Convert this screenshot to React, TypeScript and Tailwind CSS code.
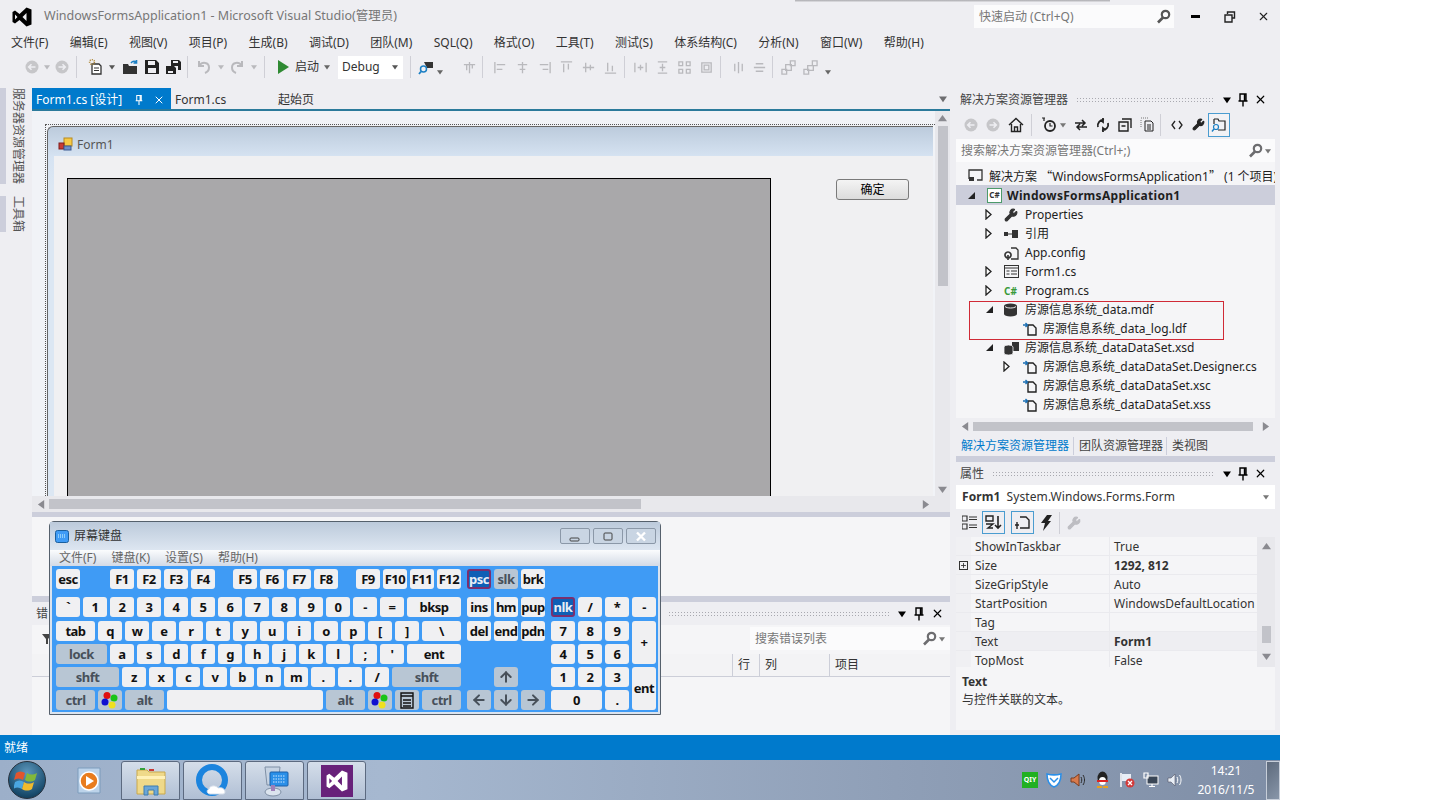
import type { ReactNode } from 'react';
import { ArrowDown, ArrowLeft, ArrowRight, ArrowUp, Plus, Wrench, X } from 'lucide-react';

// shared bits
const Tri = ({ dir, className = 'text-[#6d6d70]', size = 7 }: { dir: 'up' | 'down' | 'left' | 'right'; className?: string; size?: number }) => {
  const pts = { up: '0,8 5,1 10,8', down: '0,2 10,2 5,9', left: '8,0 8,10 1,5', right: '2,0 2,10 9,5' }[dir];
  return (
    <svg width={size} height={size} viewBox="0 0 10 10" className={className}>
      <polygon points={pts} fill="currentColor" />
    </svg>
  );
};

const Pin = ({ className = 'text-black' }: { className?: string }) => (
  <svg width="10" height="14" viewBox="0 0 10 14" className={className}>
    <path d="M2 1h6v7H2zM0.5 8h9M5 8v5.5M6.5 1.5v6" fill="none" stroke="currentColor" strokeWidth="1.4" />
  </svg>
);

const Dots = ({ className = '' }: { className?: string }) => (
  <div className={`h-[6px] flex-1 bg-[radial-gradient(#a9a9b0_0.6px,transparent_0.7px)] bg-[length:3px_3px] ${className}`} />
);

const PanelTitle = ({ title }: { title: string }) => (
  <div className="flex h-[23px] items-center text-[12px] text-[#444]">
    <span className="ml-[4px] mr-[8px] whitespace-nowrap">{title}</span>
    <Dots />
    <div className="ml-[7px] flex w-[54px] items-center text-black">
      <Tri dir="down" className="ml-[2px] text-black" size={8} />
      <Pin className="ml-[7px] text-black" />
      <X size={13} strokeWidth={2.2} className="ml-[6px]" />
    </div>
  </div>
);

const SearchIcon = ({ className = 'text-[#6d6d70]' }: { className?: string }) => (
  <svg width="15" height="15" viewBox="0 0 15 15" className={className}>
    <circle cx="9.5" cy="5.5" r="3.7" fill="none" stroke="currentColor" strokeWidth="2.2" />
    <path d="M7 8.5 2 13.5" stroke="currentColor" strokeWidth="2.6" />
  </svg>
);

const VsLogo = ({ fill = '#000', size = 20 }: { fill?: string; size?: number }) => (
  <svg width={size} height={size} viewBox="0 0 20 20">
    <path
      fillRule="evenodd"
      fill={fill}
      d="M14.5 0.5 19.5 2.5V17.5L14.5 19.5 7.5 13 3 16.5 0.5 15V5L3 3.5 7.5 7ZM14.5 6 10.5 10 14.5 14ZM3 7.5V12.5L5.5 10Z"
    />
  </svg>
);

const NavCircle = ({ dir }: { dir: 'l' | 'r' }) => (
  <svg width="14" height="14" viewBox="0 0 14 14">
    <circle cx="7" cy="7" r="6.5" fill="#c6c6c9" />
    <path d={dir === 'l' ? 'M10.5 7H4M6.5 4.2 3.7 7l2.8 2.8' : 'M3.5 7H10M7.5 4.2 10.3 7l-2.8 2.8'} fill="none" stroke="#eeeef2" strokeWidth="1.6" />
  </svg>
);

const Sep = ({ className = '' }: { className?: string }) => <div className={`h-[22px] w-px bg-[#cfcfd6] ${className}`} />;

const GreyGlyph = ({ d, className = '' }: { d: string; className?: string }) => (
  <svg width="15" height="15" viewBox="0 0 16 16" className={className}>
    <path d={d} fill="none" stroke="#b9b9bd" strokeWidth="1.4" />
  </svg>
);

const Grip = ({ className = '' }: { className?: string }) => (
  <div className={`h-[20px] w-[5px] bg-[radial-gradient(#a9a9b0_0.6px,transparent_0.7px)] bg-[length:2px_2px] ${className}`} />
);

// toolbar
const menus = ['文件(F)', '编辑(E)', '视图(V)', '项目(P)', '生成(B)', '调试(D)', '团队(M)', 'SQL(Q)', '格式(O)', '工具(T)', '测试(S)', '体系结构(C)', '分析(N)', '窗口(W)', '帮助(H)'];

const alignGlyphs = [
  'M2 2v12M4 5h9M4 10h6',
  'M8 2v12M3 5h10M5 10h6',
  'M14 2v12M3 5h9M6 10h6',
  'M2 2h12M5 4v9M10 4v6',
  'M2 8h12M5 3v10M10 5v6',
  'M2 14h12M5 3v9M10 6v6',
];
const sizeGlyphs = [
  'M2 3v10M14 3v10M5 8h6M8 5v6',
  'M3 2h10M3 14h10M8 4v8M5 8h6',
  'M2 2h4v4H2zM10 2h4v4h-4zM2 10h4v4H2zM10 10h4v4h-4z',
  'M3 3h10v10H3zM5.5 5.5h5v5h-5z',
];

const Toolbar = () => (
  <div className="mb-[2px] flex h-[30px] items-center pl-[14px]">
    <Grip />
    <div className="ml-[6px]"><NavCircle dir="l" /></div>
    <Tri dir="down" className="ml-[5px] text-[#b9b9bd]" size={6} />
    <div className="ml-[5px]"><NavCircle dir="r" /></div>
    <Sep className="ml-[7px]" />
    <svg width="16" height="16" viewBox="0 0 16 16" className="ml-[11px]">
      <path d="M4 5h7l2 2v8H4z" fill="#fff" stroke="#333" strokeWidth="1.3" />
      <path d="M6 9h5M6 11.5h5" stroke="#333" />
      <circle cx="4" cy="3" r="2.4" fill="none" stroke="#b08a3a" strokeDasharray="1 1" strokeWidth="1.6" />
    </svg>
    <Tri dir="down" className="ml-[5px] text-[#555]" size={6} />
    <svg width="17" height="15" viewBox="0 0 17 15" className="ml-[7px]">
      <path d="M1 4h5l1 2h8v8H1z" fill="#333" />
      <path d="M9 3c2-2.5 4-2 5.5-.5M14.500 0v3h-3" fill="none" stroke="#1b7fc4" strokeWidth="1.6" />
    </svg>
    <svg width="14" height="14" viewBox="0 0 14 14" className="ml-[6px]">
      <path fillRule="evenodd" fill="#222" d="M0 0h11l3 3v11H0ZM3 1v4h7V1ZM3 8v5h8V8Z" />
    </svg>
    <svg width="15" height="14" viewBox="0 0 15 14" className="ml-[7px]">
      <path fillRule="evenodd" fill="#222" d="M5 0h8l2 2v8h-3V6H5ZM7 1v2h5V1Z" />
      <path fillRule="evenodd" fill="#222" d="M0 6h8l2 2v6H0ZM2 11v2h5v-2Z" />
    </svg>
    <Sep className="ml-[6px]" />
    <svg width="16" height="16" viewBox="0 0 16 16" className="ml-[8px]">
      <path d="M3 2v5h5M3.500 6.500C6 2.500 13 3 13 8.500c0 2.500-1.500 4.500-4 5.500" fill="none" stroke="#b9b9bd" strokeWidth="2" />
    </svg>
    <Tri dir="down" className="ml-[6px] text-[#b9b9bd]" size={6} />
    <svg width="16" height="16" viewBox="0 0 16 16" className="ml-[5px]">
      <path d="M13 2v5H8M12.500 6.500C10 2.500 3 3 3 8.500c0 2.500 1.500 4.500 4 5.500" fill="none" stroke="#b9b9bd" strokeWidth="2" />
    </svg>
    <Tri dir="down" className="ml-[6px] text-[#b9b9bd]" size={6} />
    <Sep className="ml-[7px]" />
    <svg width="11" height="14" viewBox="0 0 11 14" className="ml-[13px]"><polygon points="0,0 11,7 0,14" fill="#2f8a33" /></svg>
    <span className="ml-[6px] text-[12px] leading-none text-[#333]">启动</span>
    <Tri dir="down" className="ml-[5px] text-[#666]" size={6} />
    <div className="ml-[8px] flex h-[23px] w-[65px] items-center justify-between bg-white pl-[4px] pr-[5px] text-[12px] text-[#333]">
      Debug
      <Tri dir="down" className="text-[#555]" size={6} />
    </div>
    <Sep className="ml-[7px]" />
    <svg width="16" height="16" viewBox="0 0 16 16" className="ml-[7px]">
      <path d="M6 3h9v6H9z" fill="#333" />
      <circle cx="5.500" cy="10" r="3" fill="none" stroke="#1b7fc4" strokeWidth="1.5" />
      <path d="M3 12.500 1 15" stroke="#1b7fc4" strokeWidth="1.8" />
    </svg>
    <Tri dir="down" className="ml-[3px] mt-[10px] text-[#666]" size={6} />
    <Grip className="ml-[6px]" />
    <GreyGlyph d="M8 2v12M2 5h12M5 5v6M11 5v4" className="ml-[8px]" />
    <Sep className="ml-[5px]" />
    <div className="ml-[10px] flex gap-[7px]">
      {alignGlyphs.map((d) => <GreyGlyph key={d} d={d} />)}
    </div>
    <Sep className="ml-[6px]" />
    <div className="ml-[8px] flex gap-[7px]">
      {sizeGlyphs.map((d) => <GreyGlyph key={d} d={d} />)}
    </div>
    <Sep className="ml-[6px]" />
    <div className="ml-[10px] flex gap-[6px]">
      <GreyGlyph d="M8 2v12M4 4v8M12 4v8" />
      <GreyGlyph d="M2 8h12M4 4h8M4 12h8" />
    </div>
    <Sep className="ml-[5px]" />
    <div className="ml-[8px] flex gap-[7px]">
      <GreyGlyph d="M1 10h5v5H1zM5 5h6v6H5zM10 1h5v5h-5z" />
      <GreyGlyph d="M10 1h5v5h-5zM5 6h6v5H5zM1 10h5v5H1z" />
    </div>
    <Tri dir="down" className="ml-[7px] mt-[10px] text-[#666]" size={6} />
  </div>
);

// left dock
const VerticalTab = ({ label, h }: { label: string; h: string }) => (
  <div className={`flex ${h}`}>
    <div className="w-[6px] bg-[#cccedb]" />
    <span className="ml-[4px] whitespace-nowrap text-[12px] leading-[16px] text-[#555] [text-orientation:sideways] [writing-mode:vertical-rl]">{label}</span>
  </div>
);

const LeftDock = () => (
  <div className="w-[32px] shrink-0 pt-[4px]">
    <VerticalTab label="服务器资源管理器" h="h-[96px]" />
    <div className="mt-[12px]"><VerticalTab label="工具箱" h="h-[36px]" /></div>
  </div>
);

// designer
const DesignerTabs = () => (
  <>
    <div className="mt-[4px] flex h-[21px] items-center text-[12px]">
      <div className="flex h-full w-[139px] items-center bg-[#007acc] pl-[4px] pt-[2px] text-white">
        Form1.cs [设计]
        <Pin className="ml-[12px] scale-75 text-white" />
        <X size={12} strokeWidth={2} className="ml-[9px]" />
      </div>
      <span className="ml-[4px] w-[103px] pt-[2px] text-[#333]">Form1.cs</span>
      <span className="pt-[2px] text-[#333]">起始页</span>
      <Tri dir="down" className="ml-auto mr-[3px] text-[#6d6d70]" size={8} />
    </div>
    <div className="h-[2px] bg-[#2b7a9b]" />
  </>
);

const Designer = () => (
  <div className="flex h-[385px]">
    <div className="flex-1 overflow-hidden bg-[#f1f3f7] pl-[13px] pt-[13px]">
      <div className="h-[500px] w-[890px] border-l border-t border-dotted border-[#555] pl-[1px] pt-[1px]">
        <div className="w-[886px] rounded-tl-[6px] border-l border-t border-[#666] bg-[linear-gradient(#bccbdc_0,#d6e3f2_30px,#dce7f3_60px)]">
          <div className="flex h-[29px] items-center pl-[10px] pt-[6px] text-[12px] text-[#555]">
            <svg width="15" height="15" viewBox="0 0 15 15">
              <rect x="6" y="1" width="8" height="8" fill="#f6c944" stroke="#b88a1c" />
              <rect x="1" y="6" width="5" height="6" fill="#c83a34" stroke="#7e1c1a" />
              <rect x="6" y="9" width="7" height="4" fill="#6d8fc9" stroke="#3c5a92" />
            </svg>
            <span className="ml-[4px]">Form1</span>
          </div>
          <div className="ml-[6px] flex h-[400px] bg-[#f0f0f2] pl-[13px] pt-[22px]">
            <div className="h-[400px] w-[704px] border border-black bg-[#a9a8aa]" />
            <button className="ml-[65px] mt-px h-[21px] w-[73px] rounded-[3px] border border-[#7a7a7a] bg-[linear-gradient(#f4f4f4,#dcdcdc)] text-[12px] leading-none text-black">确定</button>
          </div>
        </div>
      </div>
    </div>
    <div className="flex w-[15px] flex-col items-center bg-[#e8e8ec] pt-[3px]">
      <Tri dir="up" size={9} className="text-[#8a8a90]" />
      <div className="mt-[3px] h-[160px] w-[10px] bg-[#c2c3c9]" />
      <Tri dir="down" size={9} className="mt-auto mb-[2px] text-[#8a8a90]" />
    </div>
  </div>
);

const DesignerScroll = () => (
  <div className="flex h-[16px] items-center bg-[#e8e8ec] pl-[5px] pr-[20px]">
    <Tri dir="left" size={9} className="text-[#8a8a90]" />
    <div className="ml-[3px] h-[10px] w-[592px] bg-[#c2c3c9]" />
    <Tri dir="right" size={9} className="ml-auto text-[#8a8a90]" />
  </div>
);

// error list
const ErrorList = () => (
  <div className="flex-1 bg-[#f5f5f7]">
    <div className="flex h-[23px] items-center bg-[#eeeef2] text-[12px] text-[#444]">
      <span className="ml-[4px]">错</span>
      <Dots className="ml-[620px]" />
      <div className="ml-[8px] flex w-[52px] items-center">
        <Tri dir="down" className="text-black" size={8} />
        <Pin className="ml-[8px] text-black" />
        <X size={13} strokeWidth={2.2} className="ml-[7px] text-black" />
      </div>
    </div>
    <div className="mt-[2px] flex h-[23px] items-center">
      <svg width="10" height="10" viewBox="0 0 10 10" className="ml-[10px]"><polygon points="0,0 10,0 6,5 6,10 4,10 4,5" fill="#444" /></svg>
      <div className="ml-auto flex h-full w-[200px] items-center bg-[#fbfbfc] pl-[5px] pr-[5px] text-[12px] text-[#777]">
        搜索错误列表
        <SearchIcon className="ml-auto text-[#6d6d70]" />
        <Tri dir="down" className="ml-[2px] text-[#777]" size={6} />
      </div>
    </div>
    <div className="mt-[4px] flex h-[23px] items-center border-b border-[#ccced8] bg-[#f3f3f5] text-[12px] text-[#333]">
      <div className="h-full w-[700px]" />
      <div className="flex h-full w-[27px] items-center border-l border-[#ccced8] pl-[5px]">行</div>
      <div className="flex h-full w-[70px] items-center border-l border-[#ccced8] pl-[5px]">列</div>
      <div className="flex h-full flex-1 items-center border-l border-[#ccced8] pl-[5px]">项目</div>
    </div>
  </div>
);

// solution explorer
const FileLink = () => (
  <svg width="16" height="16" viewBox="0 0 16 16">
    <path d="M6 4h5l3 3v7H6z" fill="#f5f5f7" stroke="#222" strokeWidth="1.4" />
    <path d="M1 4h4M3.500 2l2 2-2 2" fill="none" stroke="#1b6fb4" strokeWidth="1.4" />
  </svg>
);

const icons: Record<string, ReactNode> = {
  wrench: <Wrench size={14} fill="#333" className="text-[#333]" />,
  refs: (
    <svg width="15" height="10" viewBox="0 0 15 10"><path d="M0 3h4v4H0zM4 4.500h4v1H4zM8 1h6v8H8z" fill="#333" /></svg>
  ),
  config: (
    <svg width="16" height="16" viewBox="0 0 16 16">
      <path d="M7 3h5l2 2v9H7" fill="none" stroke="#333" strokeWidth="1.3" />
      <path d="M4 7a3 3 0 1 0 .01 0M4 10v5" fill="none" stroke="#333" strokeWidth="1.6" />
    </svg>
  ),
  form: (
    <svg width="15" height="13" viewBox="0 0 15 13">
      <rect x="0.500" y="0.500" width="14" height="12" fill="none" stroke="#333" />
      <path d="M0 3h15M2.500 6h3M7 6h6M2.500 9h3M7 9h6" stroke="#333" />
    </svg>
  ),
  cs: <span className="text-[10px] font-bold leading-none text-[#3a9a3a]">C#</span>,
  db: (
    <svg width="13" height="14" viewBox="0 0 13 14">
      <path d="M0 3a6.500 2.500 0 0 1 13 0v8a6.500 2.500 0 0 1-13 0z" fill="#333" />
      <path d="M1 3.500c2 2 9 2 11 0" fill="none" stroke="#eee" />
    </svg>
  ),
  dbset: (
    <svg width="16" height="14" viewBox="0 0 16 14">
      <path d="M8 1h7v9H8z" fill="#333" />
      <path d="M0 6a4.500 2 0 0 1 9 0v6a4.500 2 0 0 1-9 0z" fill="#333" stroke="#f5f5f7" strokeWidth="0.8" />
    </svg>
  ),
  link: <FileLink />,
};

type TreeItem = { level: number; arrow?: 'open' | 'closed'; icon: string; label: string };

const treeRows: TreeItem[] = [
  { level: 1, arrow: 'closed', icon: 'wrench', label: 'Properties' },
  { level: 1, arrow: 'closed', icon: 'refs', label: '引用' },
  { level: 1, icon: 'config', label: 'App.config' },
  { level: 1, arrow: 'closed', icon: 'form', label: 'Form1.cs' },
  { level: 1, arrow: 'closed', icon: 'cs', label: 'Program.cs' },
  { level: 1, arrow: 'open', icon: 'db', label: '房源信息系统_data.mdf' },
  { level: 2, icon: 'link', label: '房源信息系统_data_log.ldf' },
  { level: 1, arrow: 'open', icon: 'dbset', label: '房源信息系统_dataDataSet.xsd' },
  { level: 2, arrow: 'closed', icon: 'link', label: '房源信息系统_dataDataSet.Designer.cs' },
  { level: 2, icon: 'link', label: '房源信息系统_dataDataSet.xsc' },
  { level: 2, icon: 'link', label: '房源信息系统_dataDataSet.xss' },
];

const TreeArrow = ({ kind }: { kind?: 'open' | 'closed' }) => (
  <div className="flex w-[20px] items-center">
    {kind === 'open' && <svg width="9" height="9" viewBox="0 0 9 9" className="ml-[1px]"><polygon points="8,1 8,8 1,8" fill="#222" /></svg>}
    {kind === 'closed' && <svg width="8" height="11" viewBox="0 0 8 11" className="ml-[1px]"><polygon points="1,1 6,5.500 1,10" fill="#fff" stroke="#222" strokeWidth="1.3" /></svg>}
  </div>
);

const TreeRow = ({ item }: { item: TreeItem }) => (
  <div className={`flex h-[19px] items-center ${item.level === 1 ? 'pl-[28px]' : 'pl-[46px]'}`}>
    <TreeArrow kind={item.arrow} />
    <div className="flex w-[21px] items-center justify-start">{icons[item.icon]}</div>
    <span className="whitespace-nowrap">{item.label}</span>
  </div>
);

const SolutionExplorer = () => (
  <div className="relative">
    <PanelTitle title="解决方案资源管理器" />
    <div className="mt-px flex h-[25px] items-center pl-[8px]">
      <NavCircle dir="l" />
      <div className="ml-[8px]"><NavCircle dir="r" /></div>
      <svg width="16" height="16" viewBox="0 0 16 16" className="ml-[8px]"><path d="M1 8 8 1.500 15 8M3.500 7v7.500h9V7M6.500 14.500V10h3v4.500" fill="none" stroke="#222" strokeWidth="1.4" /></svg>
      <Sep className="ml-[7px]" />
      <svg width="16" height="16" viewBox="0 0 16 16" className="ml-[9px]"><circle cx="9" cy="9" r="5" fill="none" stroke="#222" strokeWidth="1.8" /><path d="M9 6v3h2.500M1 1h3M3 1v3" fill="none" stroke="#222" strokeWidth="1.2" /></svg>
      <Tri dir="down" className="ml-[3px] text-[#777]" size={6} />
      <svg width="14" height="12" viewBox="0 0 14 12" className="ml-[8px]"><path d="M1 4h10M8 1l3 3-3 3M13 8H3M6 5 3 8l3 3" fill="none" stroke="#222" strokeWidth="1.5" /></svg>
      <svg width="14" height="14" viewBox="0 0 14 14" className="ml-[8px]"><path d="M2 9C1 5 4 1.500 8 2M12 5c1 4-2 7.500-6 7M7 0v4L4.500 2M7 14v-4l2.500 2" fill="none" stroke="#222" strokeWidth="1.8" /></svg>
      <svg width="14" height="14" viewBox="0 0 14 14" className="ml-[8px]"><path d="M4 1h9v9M1 4h9v9H1zM3.500 8h4" fill="none" stroke="#222" strokeWidth="1.4" /></svg>
      <svg width="14" height="15" viewBox="0 0 14 15" className="ml-[8px]"><path d="M5 4h6l2 2v8H5zM7 8h4M7 10h4M7 12h4" fill="none" stroke="#222" /><path d="M1 1h7M1 3v8" stroke="#777" strokeDasharray="1 1" /></svg>
      <Sep className="ml-[6px]" />
      <svg width="12" height="10" viewBox="0 0 12 10" className="ml-[10px]"><path d="M4 1 1 5l3 4M8 1l3 4-3 4" fill="none" stroke="#222" strokeWidth="1.3" /></svg>
      <Wrench size={13} fill="#222" className="ml-[9px] text-[#222]" />
      <div className="ml-[3px] flex h-[24px] w-[22px] items-center justify-center border border-[#4a9cd0] bg-[#f2f2f5]">
        <svg width="16" height="16" viewBox="0 0 16 16"><path d="M3 2h4l1 2h6v9H7M3 2v5" fill="none" stroke="#222" strokeWidth="1.2" /><circle cx="5" cy="10" r="2.500" fill="none" stroke="#1b7fc4" strokeWidth="1.2" /><path d="M3 12 1 14.500" stroke="#1b7fc4" strokeWidth="1.4" /></svg>
      </div>
    </div>
    <div className="mt-[2px] flex h-[23px] items-center bg-[#fbfbfc] pl-[5px] pr-[4px] text-[12px] text-[#777]">
      搜索解决方案资源管理器(Ctrl+;)
      <SearchIcon className="ml-auto text-[#6d6d70]" />
      <Tri dir="down" className="ml-[2px] text-[#777]" size={6} />
    </div>
    <div className="h-[272px] overflow-hidden bg-[#f5f5f7] pt-[4px] text-[12px] leading-[19px] text-[#1e1e1e]">
      <div className="flex h-[19px] items-center overflow-hidden pl-[12px]">
        <svg width="15" height="13" viewBox="0 0 15 13" className="shrink-0"><path d="M1 10V1h13v10h-5" fill="none" stroke="#333" strokeWidth="1.3" /><path d="M1 8h5v4H1z" fill="#333" /></svg>
        <span className="ml-[6px] whitespace-nowrap">解决方案 <span className="font-['Noto_Sans_CJK_SC']">“</span>WindowsFormsApplication1<span className="font-['Noto_Sans_CJK_SC']">”</span> (1 个项目)</span>
      </div>
      <div className="flex h-[20px] items-center bg-[#cccedb] pl-[10px]">
        <TreeArrow kind="open" />
        <div className="ml-px flex h-[15px] w-[15px] items-center justify-center border border-[#4c9a6a] bg-white text-[8px] font-bold leading-none text-[#333]">C#</div>
        <span className="ml-[5px] font-bold tracking-[0.3px]">WindowsFormsApplication1</span>
      </div>
      {treeRows.map((item) => <TreeRow key={item.label} item={item} />)}
      <div className="mt-[4px] flex h-[16px] items-center bg-[#eeeef2] pl-[5px] pr-[5px]">
        <Tri dir="left" size={9} className="text-[#8a8a90]" />
        <div className="ml-[3px] h-[9px] w-[280px] bg-[#c2c3c9]" />
        <Tri dir="right" size={9} className="ml-auto text-[#8a8a90]" />
      </div>
    </div>
    <div className="flex h-[22px] items-center pt-[2px] text-[12px] text-[#444]">
      <span className="border-r border-[#cccedb] pl-[5px] pr-[4px] text-[#007acc]">解决方案资源管理器</span>
      <span className="border-r border-[#cccedb] pl-[5px] pr-[3px]">团队资源管理器</span>
      <span className="pl-[5px]">类视图</span>
    </div>
    <div className="h-[6px] bg-[#cccedb]" />
    {/* red note from the person who took the shot */}
    <div className="absolute left-[13px] top-[213px] h-[39px] w-[255px] border border-[#d02a36]" />
  </div>
);

// properties
const propRows = [
  { name: 'ShowInTaskbar', value: 'True' },
  { name: 'Size', value: '1292, 812', bold: true, plus: true },
  { name: 'SizeGripStyle', value: 'Auto' },
  { name: 'StartPosition', value: 'WindowsDefaultLocation' },
  { name: 'Tag', value: '' },
  { name: 'Text', value: 'Form1', bold: true, current: true },
  { name: 'TopMost', value: 'False' },
];

const Properties = () => (
  <div>
    <PanelTitle title="属性" />
    <div className="flex h-[24px] items-center justify-between bg-white pl-[6px] pr-[6px] text-[12px] text-[#333]">
      <span className="tracking-[0.1px]"><b>Form1</b><span className="ml-[6px]">System.Windows.Forms.Form</span></span>
      <Tri dir="down" className="text-[#777]" size={6} />
    </div>
    <div className="flex h-[27px] items-center pl-[6px]">
      <svg width="15" height="15" viewBox="0 0 15 15"><path d="M0 1h5v5H0zM0 9h5v5H0zM7 2h8M7 4.500h8M7 10h8M7 12.500h8" fill="none" stroke="#333" strokeWidth="1.2" /></svg>
      <div className="ml-[5px] flex h-[23px] w-[23px] items-center justify-center border border-[#4a9cd0]">
        <svg width="17" height="15" viewBox="0 0 17 15">
          <path d="M1 1h7v5H1zM1 9h7L3 13h5" fill="none" stroke="#222" strokeWidth="1.4" />
          <path d="M13 1v12M10 10l3 3 3-3" fill="none" stroke="#222" strokeWidth="1.6" />
        </svg>
      </div>
      <div className="ml-[6px] flex h-[23px] w-[23px] items-center justify-center border border-[#4a9cd0]">
        <svg width="17" height="15" viewBox="0 0 17 15"><path d="M6 2h6l3 3v8H6M3 7v7M1 10h4" fill="none" stroke="#222" strokeWidth="1.4" /></svg>
      </div>
      <svg width="12" height="16" viewBox="0 0 12 16" className="ml-[6px]"><polygon points="7,0 12,0 8,6 11,6 3,16 5,8 1,8" fill="#222" /></svg>
      <Sep className="ml-[7px]" />
      <Wrench size={14} fill="#bdbdc2" className="ml-[7px] text-[#bdbdc2]" />
    </div>
    <div className="mt-px flex h-[130px] overflow-hidden bg-[#f5f5f7] text-[12px] text-[#333]">
      <div className="flex-1">
        {propRows.map((r) => (
          <div key={r.name} className={`flex h-[19px] border-b border-[#eaeaee] leading-[20px] ${r.current ? 'bg-[#eeeef2]' : ''}`}>
            <div className="flex w-[15px] items-center justify-center bg-[#f0f0f3]">
              {r.plus && <div className="flex h-[9px] w-[9px] items-center justify-center border border-[#333]"><Plus size={7} strokeWidth={3} className="text-[#333]" /></div>}
            </div>
            <div className="w-[139px] border-r border-[#eaeaee] pl-[4px]">{r.name}</div>
            <div className={`overflow-hidden whitespace-nowrap pl-[4px] ${r.bold ? 'font-bold' : ''}`}>{r.value}</div>
          </div>
        ))}
      </div>
      <div className="flex w-[18px] flex-col items-center bg-[#e8e8ec] pb-[3px] pt-[5px]">
        <Tri dir="up" size={9} className="text-[#8a8a90]" />
        <div className="mt-auto h-[17px] w-[9px] bg-[#c2c3c9]" />
        <Tri dir="down" size={9} className="mb-[3px] mt-[9px] text-[#8a8a90]" />
      </div>
    </div>
    <div className="h-[63px] bg-[#f5f5f7] pl-[6px] pt-[6px] text-[12px] leading-[18px] text-[#333]">
      <b>Text</b>
      <div>与控件关联的文本。</div>
    </div>
  </div>
);

// on-screen keyboard
type KeyKind = 'norm' | 'mod' | 'on';
type KeyDef = { label?: ReactNode; w?: string; kind?: KeyKind; gap?: string };

const keyKinds: Record<KeyKind, string> = {
  norm: 'bg-[#f0f0f2] text-[#111]',
  mod: 'bg-[#b8c6d4] text-[#47505a]',
  on: 'border-2 border-[#7a2f6e] bg-[#0f5fb5] text-[#e8eef6]',
};

const Key = ({ label, w = 'w-6', kind = 'norm', h = 'h-5' }: KeyDef & { h?: string }) => (
  <div className={`flex ${w} ${h} shrink-0 items-center justify-center rounded-[3px] text-[13px] font-bold leading-none tracking-[-0.5px] ${keyKinds[kind]}`}>
    {label}
  </div>
);

const WinFlag = () => (
  <svg width="18" height="18" viewBox="0 0 18 18">
    <circle cx="6" cy="4.500" r="3.500" fill="#e01010" />
    <circle cx="13" cy="7" r="3.500" fill="#18c418" />
    <circle cx="4" cy="11" r="3.500" fill="#1010d0" />
    <circle cx="11" cy="14" r="3.500" fill="#f0e020" />
  </svg>
);

const MenuKeyIcon = () => (
  <svg width="14" height="17" viewBox="0 0 14 17"><path d="M1 1h12v15H1zM1 4h12M3 8h8M3 11h8M3 14h8" fill="none" stroke="#111" strokeWidth="1.4" /></svg>
);

const letters = (s: string): KeyDef[] => s.split('|').map((label) => ({ label }));
const mod = (label: ReactNode, w?: string): KeyDef => ({ label, w, kind: 'mod' });

const mainRows: KeyDef[][] = [
  [{ label: 'esc' }, { gap: 'w-[24px]' }, ...letters('F1|F2|F3|F4'), { gap: 'w-[12px]' }, ...letters('F5|F6|F7|F8'), { gap: 'w-[12px]' }, ...letters('F9|F10|F11|F12')],
  [...letters('`|1|2|3|4|5|6|7|8|9|0|-|='), { label: 'bksp', w: 'w-[54px]' }],
  [{ label: 'tab', w: 'w-[39px]' }, ...letters('q|w|e|r|t|y|u|i|o|p|[|]'), { label: '\\', w: 'w-[39px]' }],
  [mod('lock', 'w-[51px]'), ...letters('a|s|d|f|g|h|j|k|l|;|\''), { label: 'ent', w: 'w-[54px]' }],
  [mod('shft', 'w-[63px]'), ...letters('z|x|c|v|b|n|m|.|.|/'), mod('shft', 'w-[69px]')],
  [mod('ctrl', 'w-[39px]'), mod(<WinFlag />), mod('alt', 'w-[39px]'), { label: '', w: 'w-[156px]' }, mod('alt', 'w-[39px]'), mod(<WinFlag />), mod(<MenuKeyIcon />), mod('ctrl', 'w-[39px]')],
];

const arrow = (Icon: typeof ArrowUp) => <Icon size={16} strokeWidth={3} />;

const navRows: KeyDef[][] = [
  [{ label: 'psc', kind: 'on' }, mod('slk'), { label: 'brk' }],
  letters('ins|hm|pup'),
  letters('del|end|pdn'),
  [],
  [{ gap: 'w-[24px]' }, mod(arrow(ArrowUp))],
  [mod(arrow(ArrowLeft)), mod(arrow(ArrowDown)), mod(arrow(ArrowRight))],
];

const numRows: KeyDef[][] = [
  [],
  [{ label: 'nlk', kind: 'on' }, { label: '/' }, { label: '*' }],
  letters('7|8|9'),
  letters('4|5|6'),
  letters('1|2|3'),
  [{ label: '0', w: 'w-[51px]' }, { label: '.' }],
];

const rowGaps = ['', 'mt-[8px]', 'mt-[4px]', 'mt-[3px]', 'mt-[3px]', 'mt-[3px]'];

const KeyBlock = ({ rows, className = '' }: { rows: KeyDef[][]; className?: string }) => (
  <div className={className}>
    {rows.map((row, i) => (
      <div key={i} className={`flex h-5 gap-[3px] ${rowGaps[i]}`}>
        {row.map((k, j) => (k.gap ? <div key={j} className={k.gap} /> : <Key key={j} {...k} />))}
      </div>
    ))}
  </div>
);

const Keyboard = () => (
  <div className="absolute left-[49px] top-[521px] h-[194px] w-[612px] rounded-t-[5px] border border-[#55606c] bg-[#dbe3ee]">
    <div className="flex h-[28px] items-center bg-[linear-gradient(#bccadb,#dde6f1)] pl-[5px] text-[12px] text-[#333]">
      <svg width="14" height="13" viewBox="0 0 14 13">
        <rect x="0.500" y="0.500" width="13" height="12" rx="2" fill="#3f9bf5" stroke="#1a5f9e" />
        <path d="M3 5h8M3 7h8" stroke="#dff" strokeDasharray="1 1" />
      </svg>
      <span className="ml-[5px]">屏幕键盘</span>
      <div className="ml-auto mr-[4px] flex gap-[3px]">
        {[
          <rect key="a" x="3" y="7" width="9" height="3" rx="1" fill="none" stroke="#444" />,
          <rect key="b" x="4" y="2" width="8" height="7" rx="1" fill="none" stroke="#444" />,
          <path key="c" d="M4 1.500l8 8M12 1.500l-8 8" stroke="#fff" strokeWidth="2.4" />,
        ].map((g, i) => (
          <div key={i} className="flex h-[16px] w-[30px] items-center justify-center rounded-[2px] border border-[#8b98a8] bg-[#c9d5e3]">
            <svg width="16" height="11" viewBox="0 0 16 11">{g}</svg>
          </div>
        ))}
      </div>
    </div>
    <div className="flex h-[16px] items-center gap-[15px] bg-[linear-gradient(#fbfcfd,#d3dae6)] px-[9px] text-[12px] text-[#666]">
      <span>文件(F)</span><span>键盘(K)</span><span>设置(S)</span><span>帮助(H)</span>
    </div>
    <div className="mx-[2px] flex h-[146px] bg-[#3f9bf5] pl-[4px] pt-[3px]">
      <KeyBlock rows={mainRows} className="w-[405px]" />
      <KeyBlock rows={navRows} className="ml-[6px] w-[78px]" />
      <KeyBlock rows={numRows} className="ml-[6px] w-[78px]" />
      <div className="ml-[3px] w-6 pt-[28px]">
        <Key label="-" />
        <div className="mt-[4px]" />
        <Key label="+" h="h-[43px]" />
        <div className="mt-[3px]" />
        <Key label="ent" h="h-[43px]" />
      </div>
    </div>
  </div>
);

// taskbar
const TaskButton = ({ children }: { children: ReactNode }) => (
  <div className="flex h-[39px] w-[59px] items-center justify-center rounded-t-[3px] border border-[#5c6a80] bg-[linear-gradient(#d5deea,#b0bfd4)]">{children}</div>
);

const Taskbar = () => (
  <div className="flex h-[40px] items-end bg-[linear-gradient(90deg,#9cafc9,#a6b8d0_30%,#8f9fb7_70%,#7f8ea6)] text-white">
    <div className="mb-px ml-[8px] flex h-[38px] w-[38px] items-center justify-center rounded-full border border-[#26303c] bg-[radial-gradient(circle_at_50%_30%,#5d97bc,#1a4d6e_70%,#0b2a42)]">
      <svg width="26" height="24" viewBox="0 0 26 24">
        <path d="M2 5c3-2 6-2 9 0l-2 7c-3-2-6-2-9 0z" fill="#e2552d" />
        <path d="M13 5c3 2 6 2 10 0l-2 7c-3 2-7 2-10 0z" fill="#83b93a" />
        <path d="M0 14c3-2 6-2 9 0l-2 7c-3-2-6-2-9 0z" fill="#4aa6e0" transform="translate(1 0)" />
        <path d="M10 14c3 2 7 2 10 0l-2 7c-3 2-7 2-10 0z" fill="#f0bb2d" />
      </svg>
    </div>
    <div className="mb-[4px] ml-[29px] w-[46px]">
      <svg width="30" height="30" viewBox="0 0 30 30">
        <path d="M3 2h22v25H3z" fill="#bcd3ea" stroke="#7d9cbc" />
        <circle cx="14" cy="15" r="9" fill="#e87c1e" stroke="#fff" strokeWidth="1.500" />
        <polygon points="11,10 19,15 11,20" fill="#fff" />
      </svg>
    </div>
    <div className="flex gap-[3px]">
      <TaskButton>
        <svg width="32" height="30" viewBox="0 0 32 30">
          <path d="M2 4h10l2 2h16v22H2z" fill="#efd98a" stroke="#c9a84c" />
          <path d="M2 10h28v3H2z" fill="#fff1b8" />
          <path d="M9 29V20h14v9h-4v-5h-6v5z" fill="#6aa6d8" stroke="#3c7cb0" />
          <rect x="5" y="2" width="5" height="2" fill="#35a03a" />
          <rect x="14" y="3" width="5" height="2" fill="#c83a34" />
        </svg>
      </TaskButton>
      <TaskButton>
        <svg width="34" height="34" viewBox="0 0 34 34">
          <circle cx="16" cy="16" r="13" fill="none" stroke="#1b84de" strokeWidth="6" />
          <path d="M14 30c-3 0-4-4-1-5 1-4 7-4 9-1 4-1 7 1 7 4 0 1-1 2-2 2z" fill="#fff" stroke="#d5deea" />
        </svg>
      </TaskButton>
      <TaskButton>
        <svg width="30" height="32" viewBox="0 0 30 32">
          <path d="M5 2h15l-2 18H7z" fill="#c7d3e2" stroke="#7f8fa5" />
          <rect x="10" y="7" width="18" height="14" rx="1" fill="#2a8fe8" stroke="#1a5fa8" />
          <path d="M13 11h12M13 14h12M13 17h12" stroke="#cfe8ff" strokeDasharray="1.500 1" />
          <ellipse cx="13" cy="27" rx="8" ry="4" fill="#dbe4ee" stroke="#7f8fa5" />
          <path d="M11 20h4v6h-4z" fill="#9d7fb8" />
        </svg>
      </TaskButton>
      <TaskButton>
        <div className="flex h-[32px] w-[32px] items-center justify-center bg-[#68217a]">
          <VsLogo fill="#fff" size={22} />
        </div>
      </TaskButton>
    </div>
    <div className="mb-px ml-auto flex items-center gap-[8px] self-center">
      <div className="flex h-[16px] w-[16px] items-center justify-center bg-[#21b021] text-[7px] font-bold leading-none">QIY</div>
      <svg width="16" height="16" viewBox="0 0 16 16"><path d="M1 2c4 1 10 1 14 0 0 6-2 11-7 13C3 13 1 8 1 2z" fill="#fff" stroke="#2a8fe8" strokeWidth="1.500" /><path d="M4 6l4 4 4-4" fill="none" stroke="#2a8fe8" strokeWidth="1.500" /></svg>
      <svg width="16" height="16" viewBox="0 0 16 16"><path d="M1 6h3l5-4v12l-5-4H1z" fill="#d87a4c" stroke="#7a3d20" /><path d="M11 5c1 2 1 4 0 6M13 3c2 3 2 7 0 10" fill="none" stroke="#2b2b2b" /></svg>
      <svg width="17" height="17" viewBox="0 0 17 17"><ellipse cx="8.500" cy="7" rx="5" ry="6.500" fill="#222" /><ellipse cx="8.500" cy="10" rx="3.500" ry="4" fill="#fff" /><path d="M3 9h11v2H3z" fill="#d22" /><path d="M3 16h5M9 16h5" stroke="#e8a020" strokeWidth="2" /></svg>
      <svg width="16" height="16" viewBox="0 0 16 16"><path d="M2 1v14" stroke="#fff" strokeWidth="1.500" /><path d="M3 2h9v7H3z" fill="#e8eef6" /><circle cx="11" cy="11" r="4.500" fill="#d23a3a" /><path d="M9 9l4 4M13 9l-4 4" stroke="#fff" strokeWidth="1.300" /></svg>
      <svg width="16" height="16" viewBox="0 0 16 16"><rect x="4" y="4" width="11" height="8" fill="#3a4656" stroke="#fff" /><path d="M1 1h4v5H1zM9 12v2M6 14.500h6" fill="none" stroke="#fff" strokeWidth="1.200" /></svg>
      <svg width="16" height="16" viewBox="0 0 16 16"><path d="M1 6h3l4-4v12l-4-4H1z" fill="#e8eef6" stroke="#556" strokeWidth="0.600" /><path d="M10 5c1 2 1 4 0 6M12.500 3c2 3 2 7 0 10" fill="none" stroke="#fff" /></svg>
      <div className="-ml-[3px] mr-[2px] w-[76px] text-center text-[12px] leading-[19px]">
        <div>14:21</div>
        <div>2016/11/5</div>
      </div>
    </div>
    <div className="mb-0 h-[39px] w-[14px] border border-[#c7ced9] bg-[linear-gradient(135deg,#5d6a7c,#8896a9)]" />
  </div>
);

export default function App() {
  return (
    <div className="relative h-[800px] w-[1434px] overflow-hidden bg-white font-['Noto_Sans','Noto_Sans_CJK_SC',sans-serif]">
      <div className="flex h-full w-[1280px] flex-col bg-[#eeeef2]">
        {/* title bar */}
        <div className="flex h-[32px] items-center pl-[12px] pt-px">
          <VsLogo />
          <span className="ml-[12px] text-[12.5px] text-[#777]">WindowsFormsApplication1 - Microsoft Visual Studio(管理员)</span>
          <div className="ml-auto flex h-[23px] w-[200px] items-center justify-between bg-[#fbfbfc] pl-[5px] pr-[3px] text-[12px] text-[#777]">
            快速启动 (Ctrl+Q)
            <SearchIcon className="text-[#555]" />
          </div>
          <div className="ml-[17px] h-[3px] w-[9px] bg-black" />
          <svg width="12" height="12" viewBox="0 0 12 12" className="ml-[24px]"><path d="M3.500 3V1h7v6h-2M1 4h7v7H1z" fill="none" stroke="#222" strokeWidth="1.400" /></svg>
          <X size={13} strokeWidth={2} className="ml-[21px] mr-[10px] text-[#222]" />
        </div>

        <div className="flex h-[20px] items-center gap-[21.35px] pl-[11px] pt-[2px] text-[12px] text-[#333]">
          {menus.map((m) => <span key={m} className="whitespace-nowrap">{m}</span>)}
        </div>

        <Toolbar />

        <div className="flex min-h-0 flex-1">
          <LeftDock />
          <div className="flex w-[918px] flex-col">
            <DesignerTabs />
            <Designer />
            <DesignerScroll />
            <div className="h-[5px] bg-[#cccedb]" />
            <div className="h-[79px] bg-[#f5f5f7]" />
            <div className="h-[6px] bg-[#cccedb]" />
            <ErrorList />
          </div>
          <div className="ml-[6px] w-[319px] pt-[4px]">
            <SolutionExplorer />
            <Properties />
          </div>
        </div>

        <div className="flex h-[25px] items-center bg-[#007acc] pl-[4px] pt-px text-[12px] text-white">就绪</div>
        <Taskbar />
      </div>

      <Keyboard />
      {/* shadow of a window that sat above the shot */}
      <div className="absolute left-[795px] top-0 h-[2px] w-[315px] bg-[linear-gradient(#a9a9ad,#e4e4e8)]" />
    </div>
  );
}
